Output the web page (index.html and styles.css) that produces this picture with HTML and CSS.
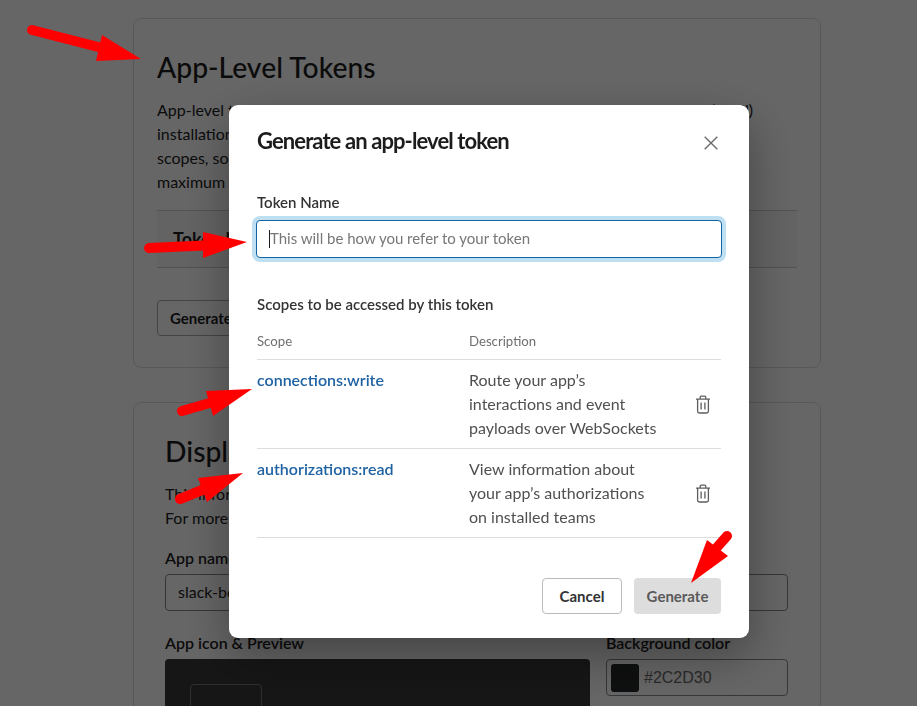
FILE: index.html
```html
<!DOCTYPE html>
<html lang="en">
<head>
    <meta charset="UTF-8">
    <meta name="viewport" content="width=device-width, initial-scale=1.0">
    <title>Generate an app-level token</title>
    <link rel="stylesheet" href="styles.css">
</head>
<body>

<main class="page">
    <section class="card card-tokens">
        <h2>App-Level Tokens</h2>
        <p class="intro">App-level tokens allow your app to use platform features that apply to multiple (or all)<br>
            installations. Generate tokens for this app that are tied to specific<br>
            scopes, so you can manage them. You can generate tokens up to a<br>
            maximum of 5 per app.</p>
        <div class="token-head">Token Name</div>
        <button class="btn-outline">Generate Token and Scopes</button>
    </section>

    <section class="card card-display">
        <h2>Display Information</h2>
        <p class="intro">This information will be displayed to users of your app.<br>
            For more details, see the guidelines.</p>
        <label class="field-label">App name</label>
        <div class="fake-input">slack-bot</div>
        <div class="icon-row">
            <div class="icon-col">
                <label class="field-label">App icon &amp; Preview</label>
                <div class="preview"><div class="preview-box"></div></div>
            </div>
            <div class="color-col">
                <label class="field-label">Background color</label>
                <div class="color-input"><span class="swatch"></span>#2C2D30</div>
            </div>
        </div>
    </section>
</main>

<div class="overlay">
    <div class="modal">
        <div class="modal-head">
            <h1>Generate an app-level token</h1>
            <svg class="close" width="14" height="14" viewBox="0 0 14 14"><path d="M.7.7l12.6 12.6M13.3.7L.7 13.3" stroke="#6a6a6a" stroke-width="1.4" fill="none"/></svg>
        </div>

        <label class="modal-label" for="tokenName">Token Name</label>
        <div class="input-wrap">
            <input type="text" id="tokenName" class="token-input" placeholder="This will be how you refer to your token">
            <span class="caret"></span>
        </div>

        <h3>Scopes to be accessed by this token</h3>

        <div class="scope-row scope-header">
            <div>Scope</div>
            <div>Description</div>
        </div>
        <div class="scope-row">
            <a class="scope-link">connections:write</a>
            <div>Route your app’s<br>interactions and event<br>payloads over WebSockets</div>
            <svg class="trash" width="16" height="19" viewBox="0 0 16 19"><path d="M1 4.2h14M5.2 4V2.4c0-.8.5-1.3 1.3-1.3h3c.8 0 1.3.5 1.3 1.3V4M2.6 4.4v11.900c0 1 .7 1.700 1.700 1.700h7.400c1 0 1.700-.7 1.700-1.700V4.400M6.100 7.500v7M9.900 7.500v7" stroke="#5e5e5e" stroke-width="1.300" fill="none"/></svg>
        </div>
        <div class="scope-row">
            <a class="scope-link">authorizations:read</a>
            <div>View information about<br>your app’s authorizations<br>on installed teams</div>
            <svg class="trash" width="16" height="19" viewBox="0 0 16 19"><path d="M1 4.2h14M5.2 4V2.4c0-.8.5-1.3 1.3-1.3h3c.8 0 1.3.5 1.3 1.3V4M2.6 4.4v11.900c0 1 .7 1.700 1.700 1.700h7.400c1 0 1.700-.7 1.700-1.700V4.400M6.100 7.500v7M9.900 7.500v7" stroke="#5e5e5e" stroke-width="1.300" fill="none"/></svg>
        </div>

        <div class="modal-foot">
            <button class="btn-cancel">Cancel</button>
            <button class="btn-generate" disabled>Generate</button>
        </div>
    </div>
</div>

<!-- red annotation arrows drawn on top of the screenshot -->
<svg class="arrows" width="917" height="706" viewBox="0 0 917 706">
    <g stroke="#f00" stroke-width="10" stroke-linecap="round" fill="#f00">
        <path d="M32 30L110 50" />
        <path d="M149 248L215 245" />
        <path d="M182 411L220 400" />
        <path d="M180 499L212 486" />
        <path d="M727 536L712 553" />
    </g>
    <g fill="#f00">
        <polygon points="141,59 96,61 102,35" />
        <polygon points="247,242 203,258 203,232" />
        <polygon points="252,389 213,416 206,391" />
        <polygon points="243,473 207,502 198,478" />
        <polygon points="691,583 707,540 728,556" />
    </g>
</svg>

</body>
</html>
```

FILE: styles.css
```css
* {
    box-sizing: border-box;
}
html, body {
    height: 100%;
}
body {
    margin: 0;
    font-family: Lato, "Noto Sans", sans-serif;
    color: #1d1c1d;
    background-color: #fff;
    overflow: hidden;
}

/* page behind the dialog */
.page {
    display: flex;
    flex-direction: column;
    gap: 34px;
    height: 100vh;
    margin-left: 133px;
    padding-top: 18px;
    width: 688px;
    overflow: hidden;
}
.card {
    flex-shrink: 0;
    border: 1px solid #ddd;
    border-radius: 8px;
    background-color: #fff;
}
.card h2 {
    margin: 0;
    font-size: 28.3px;
    line-height: 36px;
    font-weight: 500;
}
.intro {
    margin: 0;
    font-size: 16px;
    line-height: 24px;
    white-space: nowrap;
}
.card-tokens {
    height: 350px;
    padding: 30px 23px 0;
}
.card-tokens .intro {
    margin-top: 13px;
}
.token-head {
    margin-top: 16px;
    height: 58px;
    padding: 17px 16px;
    border-top: 1px solid #ccc;
    border-bottom: 1px solid #ccc;
    background-color: #f8f8f8;
    font-size: 18px;
    line-height: 22px;
    font-weight: 700;
}
.btn-outline {
    margin-top: 32px;
    height: 36px;
    padding: 0 12px;
    border: 1px solid #aaa;
    border-radius: 4px;
    background-color: #fff;
    font-family: inherit;
    font-size: 15px;
    font-weight: 700;
    color: #1d1c1d;
}
.card-display {
    height: 340px;
    padding: 30px 32px 0 31px;
}
.card-display .intro {
    margin-top: 13px;
}
.field-label {
    display: block;
    font-size: 16px;
    line-height: 20px;
    font-weight: 600;
}
.card-display > .field-label {
    margin-top: 18px;
}
.fake-input {
    margin-top: 6px;
    height: 37px;
    padding: 0 12px;
    border: 1px solid #888;
    border-radius: 4px;
    font-size: 16px;
    line-height: 34px;
}
.icon-row {
    display: flex;
    gap: 16px;
    margin-top: 22px;
}
.icon-col {
    width: 425px;
}
.color-col {
    width: 182px;
}
.preview {
    margin-top: 6px;
    height: 140px;
    padding: 25px;
    border-radius: 4px;
    background-color: #383838;
}
.preview-box {
    width: 72px;
    height: 72px;
    border: 1px solid #777;
    border-radius: 4px;
}
.color-input {
    display: flex;
    align-items: center;
    gap: 5px;
    margin-top: 6px;
    height: 37px;
    padding: 0 4px;
    border: 1px solid #888;
    border-radius: 4px;
    font-family: "Liberation Sans", Arial, sans-serif;
    font-size: 16px;
    color: #696969;
}
.swatch {
    width: 28px;
    height: 28px;
    border-radius: 3px;
    background-color: #262729;
}

/* dialog */
.overlay {
    position: fixed;
    top: 0;
    right: 0;
    bottom: 0;
    left: 0;
    display: flex;
    justify-content: center;
    align-items: flex-start;
    padding-top: 105px;
    padding-left: 61px;
    background-color: rgba(0, 0, 0, 0.6);
}
.modal {
    width: 520px;
    height: 533px;
    padding: 0 28px;
    border-radius: 9px;
    background-color: #fff;
    box-shadow: 0 18px 48px rgba(0, 0, 0, 0.35);
}
.modal-head {
    display: flex;
    justify-content: space-between;
    align-items: center;
    height: 71px;
    padding-right: 3px;
}
.modal-head h1 {
    margin: 0;
    font-size: 22px;
    line-height: 30px;
    font-weight: 700;
    letter-spacing: -0.9px;
}
.close {
    margin-top: 5px;
}
.modal-label {
    display: block;
    margin-top: 15px;
    font-size: 15px;
    line-height: 22px;
    font-weight: 600;
    color: #333;
}
.input-wrap {
    position: relative;
    margin-top: 7px;
    margin-left: -1px;
}
.token-input {
    display: block;
    width: 466px;
    height: 38px;
    padding: 0 13px 2px;
    border: 1px solid #1264a3;
    border-radius: 4px;
    outline: none;
    box-shadow: 0 0 0 4px #bfe0f2;
    font-family: inherit;
    font-size: 15px;
    color: #1d1c1d;
}
.token-input::placeholder {
    color: #777;
    opacity: 1;
}
.caret {
    position: absolute;
    left: 13px;
    top: 10px;
    width: 1px;
    height: 18px;
    background-color: #1d1c1d;
}
.modal h3 {
    margin: 36px 0 0;
    font-size: 15px;
    line-height: 20px;
    font-weight: 600;
    color: #333;
}
.scope-row {
    display: grid;
    grid-template-columns: 212px 212px 40px;
    align-items: start;
    height: 89px;
    padding-top: 8px;
    border-bottom: 1px solid #ddd;
    font-size: 16px;
    line-height: 24px;
    color: #505050;
}
.scope-header {
    height: 46px;
    padding-top: 17px;
    font-size: 13.2px;
    line-height: 20px;
    color: #6f6f6f;
}
.scope-link {
    font-weight: 600;
    color: #1f62a3;
}
.trash {
    align-self: center;
    margin-left: 14px;
    margin-top: -8px;
}
.modal-foot {
    display: flex;
    justify-content: flex-end;
    gap: 12px;
    margin-top: 40px;
}
.modal-foot button {
    height: 36px;
    padding: 0 12px;
    border-radius: 4px;
    font-family: inherit;
    font-size: 15px;
    font-weight: 700;
}
.btn-cancel {
    width: 80px;
    border: 1px solid #bbb;
    background-color: #fff;
    color: #333;
}
.btn-generate {
    width: 87px;
    border: none;
    background-color: #ddd;
    color: #5a5a5a;
}

.arrows {
    position: fixed;
    top: 0;
    left: 0;
    pointer-events: none;
}
```
